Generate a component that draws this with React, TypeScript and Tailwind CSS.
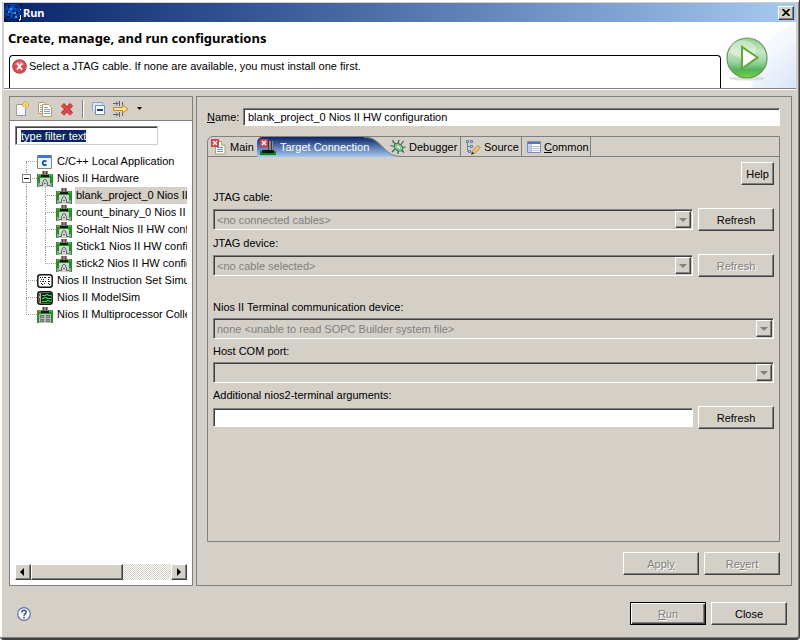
import { useEffect, useRef, type ReactNode } from 'react';
import clsx from 'clsx';

const raised =
  'border border-t-white border-l-white border-b-[#404040] border-r-[#404040] shadow-[inset_-1px_-1px_0_#808080]';
const sunken =
  'border border-t-[#808080] border-l-[#808080] border-b-white border-r-white shadow-[inset_1px_1px_0_#404040]';

/* ---------- icons ---------- */

function AppIcon() {
  return (
    <svg width="18" height="18" viewBox="0 0 18 18" className="shrink-0">
      <defs>
        <radialGradient id="appGlow" cx=".45" cy=".4" r=".65">
          <stop offset="0" stopColor="#1668dc" />
          <stop offset=".6" stopColor="#0a3a9c" />
          <stop offset="1" stopColor="#04143f" />
        </radialGradient>
      </defs>
      <rect width="18" height="18" fill="url(#appGlow)" />
      <path d="M4 1h2v3H4zM8 6h3v2H8zM2 6h2v3H2zM5 9h2v2H5zM9 10h2v3H9zM12 7h2v3h-2zM3 12h3v2H3zM11 2h2v2h-2zM7 14h2v2H7z" fill="#04143f" opacity=".8" />
      <path d="M6 4h2v2H6zM10 8h2v2h-2zM4 7h1v2H4zM11 12h2v2h-2z" fill="#3a94f4" />
      <path d="M16 5h1v1h-1zM16 11h1v5h-1zM15 15h1v2h-1z" fill="#e4f2ff" />
    </svg>
  );
}

function ErrorIcon() {
  return (
    <svg width="15" height="15" viewBox="0 0 15 15" className="shrink-0">
      <circle cx="7.5" cy="7.5" r="6.7" fill="#df4a50" stroke="#b9484d" strokeWidth="1.2" />
      <path d="M2.5 6a5.2 5.2 0 0 1 10 0z" fill="#f0898c" opacity=".6" />
      <path d="M5 4.4l5 6.2M10 4.4l-5 6.2" stroke="#fff" strokeWidth="1.7" />
    </svg>
  );
}

function RunBadge() {
  return (
    <svg width="75" height="66" viewBox="0 0 75 66" className="block shrink-0">
      <defs>
        <linearGradient id="swoosh" x1="0" y1="0" x2="1" y2="1">
          <stop offset="0" stopColor="#fff" />
          <stop offset="1" stopColor="#dbe5f8" />
        </linearGradient>
        <linearGradient id="ball" x1="0" y1="0" x2="0" y2="1">
          <stop offset="0" stopColor="#8fcf8a" />
          <stop offset=".35" stopColor="#c9e8c4" />
          <stop offset=".6" stopColor="#9bd3a0" />
          <stop offset=".8" stopColor="#52b25c" />
          <stop offset="1" stopColor="#74d838" />
        </linearGradient>
      </defs>
      <path d="M30 66C34 30 50 8 75 1v65z" fill="url(#swoosh)" opacity=".6" />
      <path d="M30 66c8-22 22-38 45-44v44z" fill="url(#swoosh)" />
      <ellipse cx="26" cy="56.5" rx="18" ry="2" fill="#bfc8c0" opacity=".5" />
      <circle cx="26" cy="36" r="20" fill="url(#ball)" stroke="#6a8f62" strokeWidth="1.2" />
      <ellipse cx="22" cy="27" rx="13" ry="9" fill="#fff" opacity=".35" />
      <path d="M21 25v21.5l15.500-11z" fill="#fff" stroke="#62a838" strokeWidth="2" />
    </svg>
  );
}

function NewIcon() {
  return (
    <svg width="16" height="16" viewBox="0 0 16 16">
      <path d="M2.500 3.500h6l3 3v8h-9z" fill="#f6f8fd" stroke="#a3a38a" />
      <path d="M3 14.500h8.500V8" fill="none" stroke="#8b93b5" />
      <path d="M11.500 .5l3.500 3.500-3.500 3.500L8 4z" fill="#fff3b0" stroke="#cf9f2e" />
      <path d="M11.500 2v4M9.500 4h4" stroke="#e5b93a" />
    </svg>
  );
}

function CopyIcon() {
  return (
    <svg width="16" height="16" viewBox="0 0 16 16">
      <path d="M1.500 1.500h6l2 2v9h-8z" fill="#fbfbf4" stroke="#b59f5b" />
      <path d="M5.500 3.500h6l3 3v9h-9z" fill="#fdfdfa" stroke="#b59f5b" />
      <path d="M3 4.500h2M3 6.500h2M3 8.500h2M3 10.500h2M7 6.500h4M7 8.500h6M7 10.500h6M7 12.500h6" stroke="#7f9fd0" />
    </svg>
  );
}

function DeleteIcon() {
  return (
    <svg width="14" height="14" viewBox="0 0 14 14">
      <path d="M2.500 2.500l9 9.500M11.500 2.500L2.500 12" stroke="#a82c30" strokeWidth="4.200" />
      <path d="M2.500 2.500l9 9.500M11.500 2.500L2.500 12" stroke="#e2474b" strokeWidth="2.800" />
    </svg>
  );
}

function CollapseIcon() {
  return (
    <svg width="14" height="14" viewBox="0 0 14 14">
      <path d="M.5 9.500v-9h10v2" fill="#dfe8f6" stroke="#8ba4cb" />
      <path d="M3.500 3.500h9v9h-9z" fill="#f7faff" stroke="#6e8cbc" />
      <path d="M5 8h6" stroke="#1d428b" strokeWidth="2" />
    </svg>
  );
}

function FilterIcon() {
  return (
    <svg width="16" height="16" viewBox="0 0 16 16">
      <path d="M0 2.500h5M0 13.500h5M3 .5l2 2-2 2M3 11.500l2 2-2 2M6.500 0v5M6.500 11v5M9.500 1v3M9.500 12v3" fill="none" stroke="#536079" />
      <path d="M.5 6.500h9v-2.500l5.500 4-5.500 4V9.500h-9z" fill="#fbe396" stroke="#bd8b2c" />
    </svg>
  );
}

function CAppIcon() {
  return (
    <svg width="16" height="16" viewBox="0 0 16 16">
      <path d="M.5 1.500h14v13H.5z" fill="#e8f6fb" stroke="#8d8a6c" />
      <path d="M1 1h13v3H1z" fill="#3c78cf" />
      <path d="M9.500 7.400C7.200 6.200 5.700 7.300 5.700 9s1.500 2.800 3.800 1.600" fill="none" stroke="#1d4f92" strokeWidth="1.800" />
    </svg>
  );
}

function BoardIcon({ multi }: { multi?: boolean }) {
  return (
    <svg width="16" height="16" viewBox="0 0 16 16" shapeRendering="crispEdges">
      <path d="M0 3h16v13H0z" fill="#22912b" />
      <path d="M1 3h3v2H1zM12 3h3v2h-3z" fill="#3fae45" />
      <path d="M5 0h6v4H5z" fill="#9b8583" />
      <path d="M6 0h1v4H6zM9 0h1v4H9z" fill="#5b4747" />
      <path d="M4 4h8v2H4z" fill="#0c1a0d" />
      <path d="M0 4h1v3H0z" fill="#c8402c" />
      {multi ? (
        <>
          <path d="M2 7h12v9H2z" fill="#b8bcb8" />
          <path d="M3 8h4v3H3zM9 8h4v3H9zM3 12h4v3H3zM9 12h4v3H9z" fill="#747874" />
          <path d="M4 9h2v1H4zM10 9h2v1h-2zM4 13h2v1H4zM10 13h2v1h-2z" fill="#9ea29e" />
        </>
      ) : (
        <>
          <path d="M3 7h10v9H3z" fill="#d0d2d0" />
          <path d="M1 12h2v4H1zM13 12h2v4h-2z" fill="#9a9e9a" />
          <path d="M7 8h2v1H7zM6 9h1v2H6zM9 9h1v2H9zM5 11h1v3H5zM10 11h1v3h-1zM3 14h3v1H3zM10 14h3v1h-3zM7 12h2v1H7z" fill="#6a6c6a" />
        </>
      )}
    </svg>
  );
}

function SimulatorIcon() {
  return (
    <svg width="16" height="14" viewBox="0 0 16 14">
      <rect x=".8" y=".8" width="14.400" height="12.400" rx="2.500" fill="#fff" stroke="#151515" strokeWidth="1.500" />
      <path
        d="M3 3h1v1H3zM5 3h1v1H5zM7 3h2v1H7zM4 5h1v1H4zM6 5h1v1H6zM3 7h1v1H3zM5 7h2v1H5zM8 7h1v1H8zM4 9h1v1H4zM7 9h1v1H7zM5 10h1v1H5zM11 3h2v1h-2zM11 5h1v1h-1zM11 7h2v1h-2zM11 9h1v1h-1zM12 10h1v1h-1z"
        fill="#222"
      />
    </svg>
  );
}

function ModelSimIcon() {
  return (
    <svg width="16" height="14" viewBox="0 0 16 14">
      <rect x=".8" y=".8" width="14.400" height="12.400" rx="2.500" fill="#a8b4a8" stroke="#151515" strokeWidth="1.500" />
      <path d="M4 2h10v10H4z" fill="#04280a" />
      <path d="M5 4.500h4v-1h2v1h3M5 7.500h2v-1h3v1h4M5 10.500h5v-1h2v1h2" fill="none" stroke="#2fe24b" />
      <path d="M2.500 3v2M2.500 7v4" stroke="#b12a2a" />
    </svg>
  );
}

function ErrorMark() {
  return (
    <>
      <path d="M.5 .5h7v7h-7z" fill="#e2485c" stroke="#c93b50" />
      <path d="M2 2l4 4M6 2L2 6" stroke="#fff" strokeWidth="1.200" />
    </>
  );
}

function MainTabIcon() {
  return (
    <svg width="16" height="16" viewBox="0 0 16 16">
      <path d="M4.500 2.500h6l3.500 3.500v9h-9.500z" fill="#fcfdff" stroke="#b3a067" />
      <path d="M10.500 2.500V6H14" fill="#f5e3a4" stroke="#b3a067" />
      <path d="M6 8.500h6M6 10.500h6M6 12.500h6" stroke="#7192cc" />
      <ErrorMark />
    </svg>
  );
}

function TargetTabIcon() {
  return (
    <svg width="16" height="16" viewBox="0 0 16 16">
      <path d="M7 2h6v9H7z" fill="#8b898d" />
      <path d="M8.500 1v10M11.500 1v10" stroke="#3b383b" />
      <path d="M0 12h16v4H0z" fill="#08861c" />
      <path d="M2 11h12v3H2z" fill="#0a130b" />
      <ErrorMark />
    </svg>
  );
}

function BugIcon() {
  return (
    <svg width="16" height="16" viewBox="0 0 16 16">
      <path d="M6 5L3 3V1M8 4.500L9 1M4.500 7.500L.5 6.500M5 10l-3 3M8 11.500V15M11 5.500l2.500-3.500M12.500 8.500l3-.5M11.500 11l2.500 2.500" fill="none" stroke="#2e6357" strokeWidth="1.200" />
      <ellipse cx="8.500" cy="8.300" rx="4.600" ry="3.300" transform="rotate(35 8.500 8.300)" fill="#8ccc86" stroke="#2f6d55" />
      <path d="M7 7l3 2.300" stroke="#dff6cf" strokeWidth="1.500" />
    </svg>
  );
}

function SourceIcon() {
  return (
    <svg width="16" height="16" viewBox="0 0 16 16">
      <path d="M2.500 3v9.500H5M2.500 7.500H5" fill="none" stroke="#7184ae" />
      <path d="M1.500 1.500h2v2h-2zM5.500 1.500h2v2h-2zM5.500 6.500h2v2h-2zM3.500 11.500h2v2h-2z" fill="#c7d4f0" stroke="#6178ad" />
      <path d="M7 12.500l6-6 2.200 2.200-6 6z" fill="#f5c977" stroke="#a5742f" strokeWidth=".8" />
      <path d="M7 12.500l2.200 2.200-3.200 1z" fill="#3a2a1c" />
    </svg>
  );
}

function CommonIcon() {
  return (
    <svg width="14" height="12" viewBox="0 0 14 12">
      <path d="M.5 .5h13v11H.5z" fill="#fff" stroke="#7a8db8" />
      <path d="M1 1h12v2H1z" fill="#5577b8" />
      <path d="M1 3h3v8H1z" fill="#c5d3ee" />
      <path d="M1 5.500h12M1 7.500h12M1 9.500h12M4.500 3v8" stroke="#b6c1dc" />
    </svg>
  );
}

function Arrow({ dir }: { dir: 'left' | 'right' | 'down' }) {
  const d = { left: 'M5 0v8L1 4z', right: 'M2 0v8l4-4z', down: 'M0 2h8L4 6z' }[dir];
  return (
    <svg width="8" height="8" viewBox="0 0 8 8">
      <path d={d} fill="currentColor" />
    </svg>
  );
}

/* ---------- controls ---------- */

interface ButtonProps {
  children: ReactNode;
  disabled?: boolean;
  primary?: boolean;
  className?: string;
}

function Button({ children, disabled, primary, className }: ButtonProps) {
  return (
    <button
      type="button"
      disabled={disabled}
      className={clsx(
        'h-[23px] shrink-0 bg-[#d4d0c8]',
        primary
          ? 'border border-black shadow-[inset_1px_1px_0_#fff,inset_-1px_-1px_0_#404040,inset_-2px_-2px_0_#808080]'
          : raised,
        disabled && 'text-[#808080] [text-shadow:1px_1px_0_#fff]',
        className ?? 'w-[76px]',
      )}
    >
      {children}
    </button>
  );
}

function Combo({ id, value }: { id: string; value: string }) {
  return (
    <div className="relative flex-1">
      <select
        id={id}
        disabled
        className={clsx('block h-[21px] w-full appearance-none bg-[#d4d0c8] pl-[3px] text-[#808080] opacity-100', sunken)}
      >
        <option>{value}</option>
      </select>
      <span
        className={clsx(
          'pointer-events-none absolute top-0.5 right-0.5 flex h-[17px] w-4 items-center justify-center bg-[#d4d0c8] text-[#808080]',
          raised,
        )}
      >
        <Arrow dir="down" />
      </span>
    </div>
  );
}

/* ---------- tree ---------- */

type Guide = 'start' | 'tee' | 'end' | 'pipe';

const tree: { label: string; guides: Guide[]; icon: ReactNode; open?: boolean; selected?: boolean }[] = [
  { label: 'C/C++ Local Application', guides: ['start'], icon: <CAppIcon /> },
  { label: 'Nios II Hardware', guides: ['tee'], icon: <BoardIcon />, open: true },
  { label: 'blank_project_0 Nios II', guides: ['pipe', 'tee'], icon: <BoardIcon />, selected: true },
  { label: 'count_binary_0 Nios II', guides: ['pipe', 'tee'], icon: <BoardIcon /> },
  { label: 'SoHalt Nios II HW confi', guides: ['pipe', 'tee'], icon: <BoardIcon /> },
  { label: 'Stick1 Nios II HW config', guides: ['pipe', 'tee'], icon: <BoardIcon /> },
  { label: 'stick2 Nios II HW config', guides: ['pipe', 'end'], icon: <BoardIcon /> },
  { label: 'Nios II Instruction Set Simu', guides: ['tee'], icon: <SimulatorIcon /> },
  { label: 'Nios II ModelSim', guides: ['tee'], icon: <ModelSimIcon /> },
  { label: 'Nios II Multiprocessor Colle', guides: ['end'], icon: <BoardIcon multi /> },
];

function TreeGuide({ kind, open }: { kind: Guide; open?: boolean }) {
  return (
    <span className="relative flex w-[19px] shrink-0 flex-col pl-2">
      <span
        className={clsx(
          'h-[9px] border-dotted border-[#a0a0a0]',
          kind !== 'start' && 'border-l',
          kind !== 'pipe' && 'border-b',
        )}
      />
      <span className={clsx('flex-1 border-dotted border-[#a0a0a0]', kind !== 'end' && 'border-l')} />
      {open && (
        <button
          type="button"
          aria-label="Collapse"
          className="absolute top-1 left-1 flex size-[9px] items-center justify-center border border-[#808080] bg-white"
        >
          <span className="h-px w-[5px] bg-black" />
        </button>
      )}
    </span>
  );
}

function Tree() {
  return (
    <ul className="mt-2 mr-[5px] ml-2">
      {tree.map(item => (
        <li key={item.label} className="flex h-[17px] overflow-hidden">
          {item.guides.map((g, i) => (
            <TreeGuide key={i} kind={g} open={item.open} />
          ))}
          <span className="flex w-4 shrink-0 items-center">{item.icon}</span>
          <span
            className={clsx(
              'ml-[3px] flex-1 overflow-hidden pl-px leading-[17px] whitespace-nowrap',
              item.selected && 'bg-[#d4d0c8]',
            )}
          >
            {item.label}
          </span>
        </li>
      ))}
    </ul>
  );
}

function ConfigList() {
  const filterRef = useRef<HTMLInputElement>(null);

  useEffect(() => {
    filterRef.current?.focus();
    filterRef.current?.select();
  }, []);

  return (
    <aside className="flex w-[184px] shrink-0 flex-col border border-[#808080] bg-white">
      <div className="flex h-6 items-center border-b border-[#808080] bg-[#d4d0c8] pl-1">
        <button type="button" aria-label="New"><NewIcon /></button>
        <button type="button" aria-label="Duplicate" className="ml-[7px]"><CopyIcon /></button>
        <button type="button" aria-label="Delete" className="ml-[7px]"><DeleteIcon /></button>
        <span className="ml-2 h-[18px] w-0.5 border-l border-[#808080] bg-white" />
        <button type="button" aria-label="Collapse all" className="ml-2"><CollapseIcon /></button>
        <button type="button" aria-label="Filter" className="ml-[7px] flex items-center gap-2">
          <FilterIcon />
          <svg width="5" height="3" viewBox="0 0 5 3"><path d="M0 0h5L2.500 3z" /></svg>
        </button>
      </div>
      <input
        ref={filterRef}
        type="text"
        aria-label="Filter"
        defaultValue="type filter text"
        className="mt-[5px] ml-[5px] h-[19px] w-[143px] border border-t-[#808080] border-r-[#d4d0c8] border-b-[#d4d0c8] border-l-[#808080] pl-[5px] shadow-[inset_1px_1px_0_#404040] outline-none selection:bg-[#0a246a] selection:text-white"
      />
      <Tree />
      <div className="mx-[5px] mt-auto mb-[5px] flex h-4 bg-[repeating-conic-gradient(#d4d0c8_0_25%,#fff_0_50%)] bg-[length:2px_2px]">
        <button type="button" aria-label="Scroll left" className={clsx('flex w-4 items-center justify-center bg-[#d4d0c8]', raised)}>
          <Arrow dir="left" />
        </button>
        <span className={clsx('w-[92px] bg-[#d4d0c8]', raised)} />
        <button type="button" aria-label="Scroll right" className={clsx('ml-auto flex w-4 items-center justify-center bg-[#d4d0c8]', raised)}>
          <Arrow dir="right" />
        </button>
      </div>
    </aside>
  );
}

/* ---------- tabs ---------- */

function Tabs() {
  const tab = 'flex items-center border-r border-[#808080]';
  return (
    <div role="tablist" className="flex h-5 rounded-tl-md border-b border-[#808080]">
      <button type="button" role="tab" className="flex w-[49px] items-center gap-[3px] pl-[3px]">
        <MainTabIcon />
        Main
      </button>
      <button type="button" role="tab" aria-selected="true" className="relative flex w-[131px] items-center gap-1 pl-[3px] text-white">
        <svg viewBox="0 0 145 20" className="absolute top-0 left-0 h-5 w-[145px]">
          <defs>
            <linearGradient id="tabFill" x1="0" y1="0" x2="0" y2="1">
              <stop offset="0" stopColor="#0a246a" />
              <stop offset="1" stopColor="#a6caf0" />
            </linearGradient>
          </defs>
          <path d="M0 20V5Q1 0 6 0h101c10 0 14 5 19 10s9 9 19 10z" fill="url(#tabFill)" />
          <path d="M107 .5c10 0 14 5 19 10s9 9 19 9" fill="none" stroke="#808080" />
        </svg>
        <span className="relative"><TargetTabIcon /></span>
        <span className="relative">Target Connection</span>
      </button>
      <button type="button" role="tab" className={clsx(tab, 'relative w-[73px] gap-[3px] pl-0.5')}>
        <BugIcon />
        Debugger
      </button>
      <button type="button" role="tab" className={clsx(tab, 'w-[61px] gap-[3px] pl-1')}>
        <SourceIcon />
        Source
      </button>
      <button type="button" role="tab" className={clsx(tab, 'w-[69px] gap-[3px] pl-[5px]')}>
        <CommonIcon />
        <span><u>C</u>ommon</span>
      </button>
    </div>
  );
}

function TargetConnection() {
  const label = 'mt-1 block h-4 leading-4';
  return (
    <div className="px-[5px] pt-[5px]">
      <div className="flex justify-end">
        <Button className="w-[33px]">Help</Button>
      </div>
      <label htmlFor="cable" className={label}>JTAG cable:</label>
      <div className="mt-[3px] flex items-center gap-[5px]">
        <Combo id="cable" value="<no connected cables>" />
        <Button>Refresh</Button>
      </div>
      <label htmlFor="device" className={label}>JTAG device:</label>
      <div className="mt-[3px] flex items-center gap-[5px]">
        <Combo id="device" value="<no cable selected>" />
        <Button disabled>Refresh</Button>
      </div>
      <label htmlFor="terminal" className="mt-[22px] block h-4 leading-4">Nios II Terminal communication device:</label>
      <div className="mt-[3px] flex">
        <Combo id="terminal" value="none <unable to read SOPC Builder system file>" />
      </div>
      <label htmlFor="port" className={label}>Host COM port:</label>
      <div className="mt-[3px] flex">
        <Combo id="port" value="" />
      </div>
      <label htmlFor="args" className={label}>Additional nios2-terminal arguments:</label>
      <div className="mt-[3px] flex items-center gap-[5px]">
        <input id="args" type="text" className={clsx('h-[19px] min-w-0 flex-1 bg-white px-1', sunken)} />
        <Button>Refresh</Button>
      </div>
    </div>
  );
}

export default function App() {
  return (
    <div className="flex min-h-screen flex-col rounded-b-sm border-r border-b-2 border-[#404040] bg-[#d4d0c8] px-[3px] pt-[3px] font-['Liberation_Sans',Arial,sans-serif] text-[11px] leading-[14px] text-black shadow-[inset_2px_2px_0_#fff,inset_-1px_-1px_0_#808080]">
      <header className="ml-px flex h-[19px] items-center bg-linear-to-r from-[#0a246a] to-[#a6caf0] pr-0.5 text-white">
        <AppIcon />
        <h1 className="ml-px font-['Noto_Sans',sans-serif] font-bold">Run</h1>
        <button type="button" aria-label="Close" className={clsx('ml-auto flex h-3.5 w-4 items-center justify-center bg-[#d4d0c8]', raised)}>
          <svg width="8" height="7" viewBox="0 0 8 7"><path d="M.5 0l7 7M7.500 0l-7 7" stroke="#000" strokeWidth="1.600" /></svg>
        </button>
      </header>

      <section className="ml-px flex border-b border-[#808080] bg-white">
        <div className="flex flex-1 flex-col pl-1">
          <h2 className="mt-2 font-['Noto_Sans',sans-serif] text-[13px] leading-4 font-bold">Create, manage, and run configurations</h2>
          <div className="ml-px mt-[9px] flex flex-1 gap-0.5 rounded-t-sm border border-b-0 border-black pt-[3px] pl-0.5">
            <ErrorIcon />
            <p>Select a JTAG cable. If none are available, you must install one first.</p>
          </div>
        </div>
        <RunBadge />
      </section>

      <main className="flex flex-1 gap-[3px] border-t border-white pt-1.5 pr-1 pl-1.5">
        <ConfigList />
        <section className="flex min-w-0 flex-1 flex-col border border-[#808080] py-2.5 pr-[11px] pl-2.5">
          <div className="mt-px flex items-center">
            <label htmlFor="name" className="w-9 shrink-0"><u>N</u>ame:</label>
            <input
              id="name"
              type="text"
              defaultValue="blank_project_0 Nios II HW configuration"
              className={clsx('h-[18px] min-w-0 flex-1 bg-white pl-1', sunken)}
            />
          </div>
          <div className="mt-2.5 flex-1 rounded-tl-md border border-[#808080]">
            <Tabs />
            <TargetConnection />
          </div>
          <div className="mt-2.5 flex justify-end gap-[5px]">
            <Button disabled>Appl<u>y</u></Button>
            <Button disabled>Re<u>v</u>ert</Button>
          </div>
        </section>
      </main>

      <footer className="flex items-center gap-[5px] pt-4 pr-[9px] pb-[13px] pl-2.5">
        <button type="button" aria-label="Help" className="mr-auto ml-1">
          <svg width="14" height="14" viewBox="0 0 14 14">
            <circle cx="7" cy="7" r="6.300" fill="#f7faff" stroke="#64769f" strokeWidth="1.200" />
            <path d="M4.800 5.500c0-3 4.600-2.800 4.400-.2C9.100 6.800 7 6.900 7 8.700M7 9.700v1.700" fill="none" stroke="#3f5689" strokeWidth="1.600" />
          </svg>
        </button>
        <Button disabled primary><u>R</u>un</Button>
        <Button>Close</Button>
      </footer>
    </div>
  );
}
